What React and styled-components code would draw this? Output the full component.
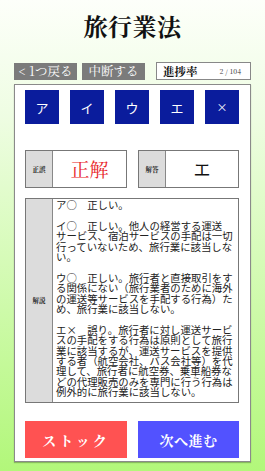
import React from 'react';
import styled, { createGlobalStyle } from 'styled-components';

const GlobalStyle = createGlobalStyle`
  html, body {
    margin: 0;
    padding: 0;
  }
  body {
    font-family: "Noto Sans CJK JP", "Noto Sans", sans-serif;
  }
`;

const serif = `"Noto Serif CJK JP", "Liberation Serif", "Noto Sans CJK JP", serif`;

const Page = styled.div`
  width: 265px;
  height: 471px;
  overflow: hidden;
  background: linear-gradient(180deg, #fdfffa 0%, #eefde2 25%, #d6fbb8 55%, #b2f77a 100%);
  display: flex;
  flex-direction: column;
  align-items: stretch;
`;

const Title = styled.h1`
  margin: 0;
  height: 62px;
  display: flex;
  align-items: center;
  justify-content: center;
  padding-bottom: 12px;
  box-sizing: border-box;
  font-family: ${serif};
  font-size: 24px;
  font-weight: 700;
  color: #111;
  letter-spacing: 0.5px;
`;

const Toolbar = styled.div`
  display: flex;
  align-items: center;
  padding: 0 14px;
  gap: 5px;
  height: 18px;
`;

const GrayButton = styled.button`
  width: 63px;
  height: 17px;
  border: none;
  padding: 0;
  background: #7b7b7b;
  color: #fff;
  font-family: ${serif};
  font-size: 12.5px;
  line-height: 17px;
  white-space: nowrap;
  display: flex;
  align-items: center;
  justify-content: center;
`;

const Progress = styled.div`
  margin-left: auto;
  width: 95px;
  height: 18px;
  box-sizing: border-box;
  border: 1px solid #888;
  background: #fff;
  display: flex;
  align-items: center;
  padding: 0 9px 0 6px;
`;

const ProgressLabel = styled.span`
  font-family: ${serif};
  font-weight: 700;
  font-size: 11.5px;
  color: #111;
`;

const ProgressCount = styled.span`
  margin-left: auto;
  font-family: ${serif};
  font-size: 7px;
  color: #333;
`;

const Card = styled.div`
  margin: 4px 14px 0;
  height: 378px;
  box-sizing: border-box;
  border: 1px solid #8a8a8a;
  box-shadow: 0 1px 1px rgba(0, 0, 0, 0.25);
  background: #fff;
  padding: 5px 11px 0 10px;
  display: flex;
  flex-direction: column;
`;

const ChoiceRow = styled.div`
  display: flex;
  gap: 11px;
`;

const Choice = styled.button`
  width: 34px;
  height: 34px;
  border: none;
  padding: 0;
  background: #0a1c9c;
  color: #fff;
  font-family: "Noto Sans CJK JP", sans-serif;
  font-size: ${({ small }) => (small ? '11px' : '13px')};
  display: flex;
  align-items: center;
  justify-content: center;
`;

const ResultRow = styled.div`
  margin-top: 26px;
  display: flex;
  gap: 11px;
`;

const Box = styled.div`
  width: ${({ w }) => w}px;
  height: ${({ h }) => h}px;
  margin-top: ${({ mt }) => mt || 0}px;
  box-sizing: border-box;
  border: 1px solid #777;
  display: flex;
  background: #fff;
`;

const Label = styled.div`
  width: 26px;
  flex-shrink: 0;
  background: #dcdcdc;
  border-right: 1px solid #888;
  display: flex;
  align-items: center;
  justify-content: center;
  font-family: ${serif};
  font-weight: 700;
  font-size: 6.5px;
  color: #222;
`;

const Value = styled.div`
  flex: 1;
  display: flex;
  align-items: center;
  justify-content: center;
  font-family: ${({ sans }) => (sans ? '"Noto Sans CJK JP", sans-serif' : serif)};
  font-size: ${({ size }) => size}px;
  color: ${({ color }) => color || '#111'};
  padding-bottom: 2px;
`;

const Explanation = styled.div`
  flex: 1;
  padding: 1px 0 0 3px;
  font-family: "Noto Sans CJK JP", sans-serif;
  font-size: 10.4px;
  line-height: 10.4px;
  color: #222;
  white-space: nowrap;
`;

const Para = styled.p`
  margin: 0 0 10.4px;
  &:last-child {
    margin-bottom: 0;
  }
`;

const Line = styled.span`
  display: block;
`;

const ActionRow = styled.div`
  margin-top: 18px;
  display: flex;
  gap: 11px;
`;

const Action = styled.button`
  width: ${({ w }) => w}px;
  height: 37px;
  border: none;
  padding: 0;
  background: ${({ bg }) => bg};
  color: #fff;
  font-family: ${serif};
  font-weight: 700;
  font-size: 14px;
  letter-spacing: ${({ spaced }) => (spaced ? '3px' : '0.5px')};
  display: flex;
  align-items: center;
  justify-content: center;
`;

const choices = ['ア', 'イ', 'ウ', 'エ', '×'];

const paragraphs = [
  ['ア○　正しい。'],
  [
    'イ○　正しい。他人の経営する運送',
    'サービス、宿泊サービスの手配は一切',
    '行っていないため、旅行業に該当しな',
    'い。',
  ],
  [
    'ウ○　正しい。旅行者と直接取引をす',
    'る関係にない（旅行業者のために海外',
    'の運送等サービスを手配する行為）た',
    'め、旅行業に該当しない。',
  ],
  [
    'エ×　誤り。旅行者に対し運送サービ',
    'スの手配をする行為は原則として旅行',
    '業に該当するが、運送サービスを提供',
    'する者（航空会社、バス会社等）を代',
    '理して、旅行者に航空券、乗車船券な',
    'どの代理販売のみを専門に行う行為は',
    '例外的に旅行業に該当しない。',
  ],
];

export default function App() {
  return (
    <Page>
      <GlobalStyle />
      <Title>旅行業法</Title>
      <Toolbar>
        <GrayButton>&lt; 1つ戻る</GrayButton>
        <GrayButton>中断する</GrayButton>
        <Progress>
          <ProgressLabel>進捗率</ProgressLabel>
          <ProgressCount>2 / 104</ProgressCount>
        </Progress>
      </Toolbar>
      <Card>
        <ChoiceRow>
          {choices.map((c) => (
            <Choice key={c} small={c === '×'}>{c}</Choice>
          ))}
        </ChoiceRow>
        <ResultRow>
          <Box w={102} h={38}>
            <Label>正誤</Label>
            <Value size={19} color="#e8262a">正解</Value>
          </Box>
          <Box w={101} h={38}>
            <Label>解答</Label>
            <Value size={17} sans>エ</Value>
          </Box>
        </ResultRow>
        <Box w={214} h={205} mt={10}>
          <Label>解説</Label>
          <Explanation>
            {paragraphs.map((lines, i) => (
              <Para key={i}>
                {lines.map((l) => (
                  <Line key={l}>{l}</Line>
                ))}
              </Para>
            ))}
          </Explanation>
        </Box>
        <ActionRow>
          <Action w={102} bg="#ff5252" spaced>ストック</Action>
          <Action w={101} bg="#5252ff">次へ進む</Action>
        </ActionRow>
      </Card>
    </Page>
  );
}
